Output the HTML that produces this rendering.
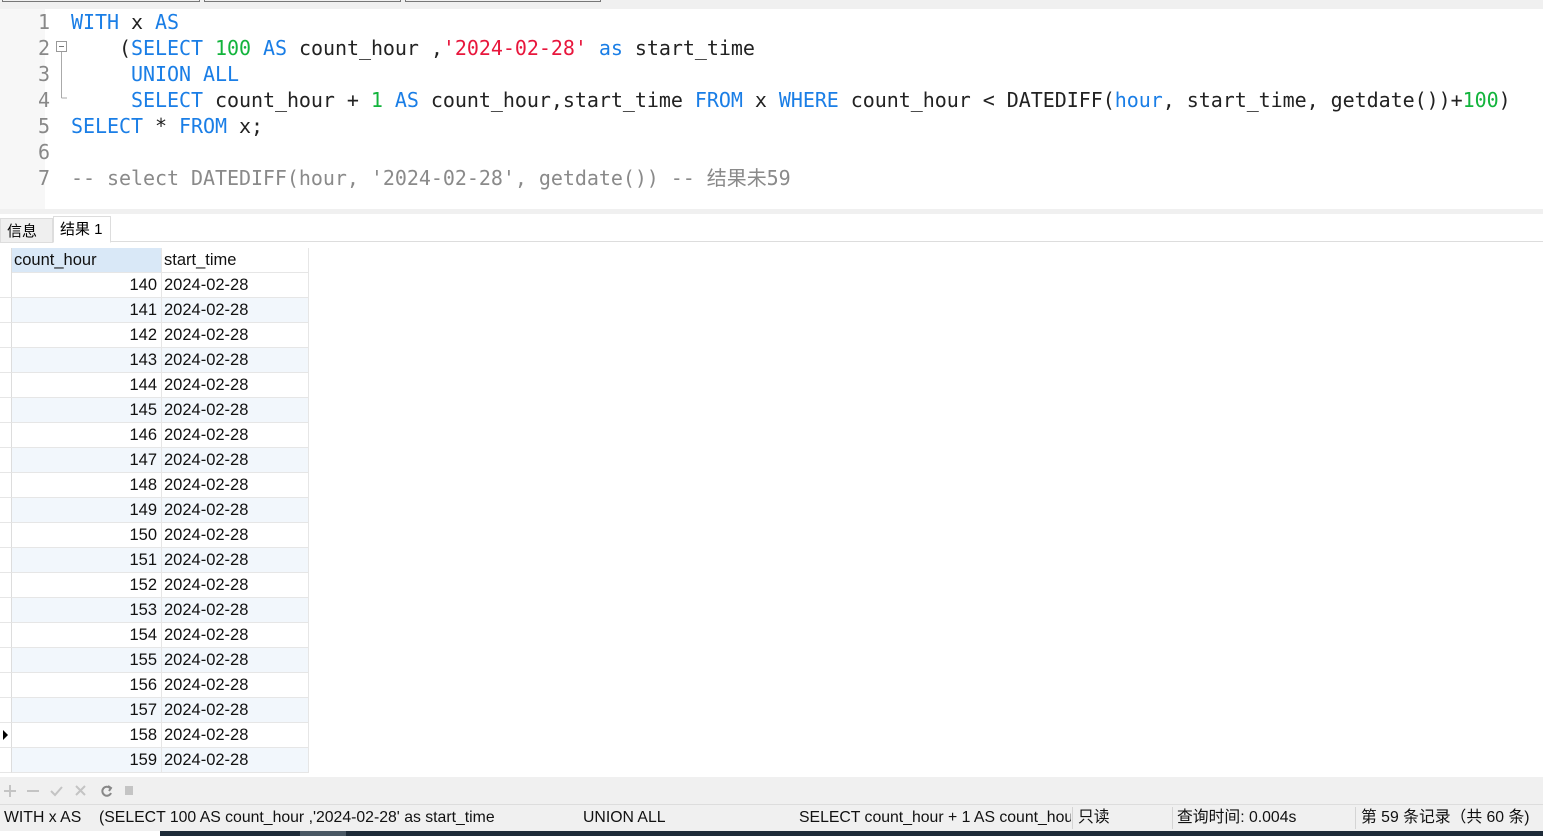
<!DOCTYPE html>
<html><head><meta charset="utf-8"><style>
*{margin:0;padding:0;box-sizing:border-box}
body{width:1543px;height:836px;overflow:hidden;background:#fff;position:relative;font-family:"Liberation Sans","Noto Sans CJK SC",sans-serif}
.top{position:absolute;left:0;top:0;width:1543px;height:9px;background:#f0f0f0}
.tb{position:absolute;top:-2px;height:4px;border:1px solid #777;border-top:none}
.gut{position:absolute;left:0;top:9px;width:45px;height:200px;background:#f7f7f7}
.code{position:absolute;left:0;top:9px;font-family:"DejaVu Sans Mono",monospace;font-size:20px;line-height:26px;color:#222;white-space:pre;letter-spacing:-0.045px}
.ln{position:absolute;left:0;width:50px;text-align:right;color:#888}
.tx{position:absolute;left:71px}
.k{color:#1a7ee6}.n{color:#12b43c}.s{color:#e8163c}.c{color:#8a8a8a}
.sep{position:absolute;left:0;top:209px;width:1543px;height:5px;background:#f0f0f0}
.tabs{position:absolute;left:0;top:214px;width:1543px;height:28px;border-bottom:1px solid #ddd}
.tab{position:absolute;top:2px;height:27px;font-size:15px;line-height:26px;padding:0 6px}
.grid{position:absolute;left:0;top:248px}
.row{position:absolute;left:0;height:25px;width:309px;font-size:16.5px;line-height:25px;color:#111}
.row .a{position:absolute;left:12px;width:150px;height:25px;text-align:right;padding-right:4px;border-right:1px solid #e6e6e6;border-bottom:1px solid #e6e6e6}
.row .b{position:absolute;left:162px;width:147px;height:25px;padding-left:2px;border-right:1px solid #e6e6e6;border-bottom:1px solid #e6e6e6}
.row .g{position:absolute;left:0;width:12px;height:25px;border-right:1px solid #ddd;border-bottom:1px solid #e6e6e6}
.alt .a,.alt .b{background:#f2f7fc}
.tool{position:absolute;left:0;top:777px;width:1543px;height:28px;background:#f0f0f0;border-bottom:1px solid #ddd;color:#bbb;font-size:15px}
.stat{position:absolute;left:0;top:805px;width:1543px;height:26px;background:#f0f0f0;font-size:15.8px;line-height:26px;color:#111;white-space:nowrap}
.stat span{position:absolute;top:0}
.vs{position:absolute;top:2px;width:1px;height:22px;background:#d4d4d4}
.dark{position:absolute;top:831px;height:5px;background:#1e2b38}
</style></head><body>
<div class="top">
<div class="tb" style="left:2px;width:198px"></div>
<div class="tb" style="left:204px;width:197px"></div>
<div class="tb" style="left:405px;width:196px"></div>
</div>
<div class="gut"></div>
<div class="code">
<div class="ln" style="top:0">1</div><div class="tx" style="top:0"><span class="k">WITH</span> x <span class="k">AS</span></div>
<div class="ln" style="top:26px">2</div><div class="tx" style="top:26px">    (<span class="k">SELECT</span> <span class="n">100</span> <span class="k">AS</span> count_hour ,<span class="s">'2024-02-28'</span> <span class="k">as</span> start_time</div>
<div class="ln" style="top:52px">3</div><div class="tx" style="top:52px">     <span class="k">UNION ALL</span></div>
<div class="ln" style="top:78px">4</div><div class="tx" style="top:78px">     <span class="k">SELECT</span> count_hour + <span class="n">1</span> <span class="k">AS</span> count_hour,start_time <span class="k">FROM</span> x <span class="k">WHERE</span> count_hour &lt; DATEDIFF(<span class="k">hour</span>, start_time, getdate())+<span class="n">100</span>)</div>
<div class="ln" style="top:104px">5</div><div class="tx" style="top:104px"><span class="k">SELECT</span> * <span class="k">FROM</span> x;</div>
<div class="ln" style="top:130px">6</div>
<div class="ln" style="top:156px">7</div><div class="tx c" style="top:156px;font-family:'DejaVu Sans Mono','Noto Sans CJK SC',monospace">-- select DATEDIFF(hour, '2024-02-28', getdate()) -- 结果未59</div>
</div>
<svg style="position:absolute;left:55px;top:40px" width="14" height="62"><rect x="1.5" y="1.5" width="10" height="10" fill="#fff" stroke="#999"/><line x1="4" y1="6.5" x2="9" y2="6.5" stroke="#777"/><line x1="6.5" y1="12" x2="6.5" y2="58" stroke="#aaa"/><line x1="6.5" y1="58" x2="12" y2="58" stroke="#aaa"/></svg>
<div class="sep"></div>
<div class="tabs">
<div class="tab" style="left:0;width:53px;background:#efefef;border:1px solid #ddd;top:4px;height:25px;line-height:26px">信息</div>
<div class="tab" style="left:53px;width:58px;background:#fff;border:1px solid #ddd;border-bottom:1px solid #fff">结果 1</div>
</div>
<div class="grid">
<div class="row" style="top:0"><div class="g" style="border-bottom:none"></div><div class="a" style="background:#d9e8f7;text-align:left;padding-left:2px">count_hour</div><div class="b">start_time</div></div>
</div>
<div id="rows"></div>
<div class="tool">
<svg style="position:absolute;left:4px;top:7px" width="130" height="14" fill="none" stroke="#c4c4c4" stroke-width="2"><path d="M6 1v12M0 7h12"/><path d="M23 7h12"/><path d="M47 7l4 4 7-8"/><path d="M72 2l9 9M81 2l-9 9"/><path d="M106 4a4.5 4.5 0 1 0 1 5" stroke="#888"/><path d="M104 2l3 2-2 3" stroke="#888"/><rect x="121" y="2" width="8" height="9" fill="#c4c4c4" stroke="none"/></svg>
</div>
<div class="stat">
<span style="left:4px">WITH x AS</span>
<span style="left:99px">(SELECT 100 AS count_hour ,'2024-02-28' as start_time</span>
<span style="left:583px">UNION ALL</span>
<span style="left:799px;width:272px;overflow:hidden">SELECT count_hour + 1 AS count_hour</span>
<div class="vs" style="left:1072px"></div>
<span style="left:1078px">只读</span>
<div class="vs" style="left:1172px"></div>
<span style="left:1177px">查询时间: 0.004s</span>
<div class="vs" style="left:1355px"></div>
<span style="left:1361px">第 59 条记录（共 60 条)</span>
</div>
<div class="dark" style="left:160px;width:140px"></div>
<div class="dark" style="left:300px;width:46px;background:#4a5864"></div>
<div class="dark" style="left:346px;width:1197px"></div>
<script>
var h='';for(var i=0;i<20;i++){var t=273+i*25;
h+='<div class="row'+(i%2==1?' alt':'')+'" style="top:'+t+'px"><div class="g">'+(i==18?'<svg width="10" height="24"><path d="M3 7l5 5-5 5z" fill="#000"/></svg>':'')+'</div><div class="a">'+(140+i)+'</div><div class="b">2024-02-28</div></div>';}
document.getElementById('rows').innerHTML=h;
</script>
</body></html>
